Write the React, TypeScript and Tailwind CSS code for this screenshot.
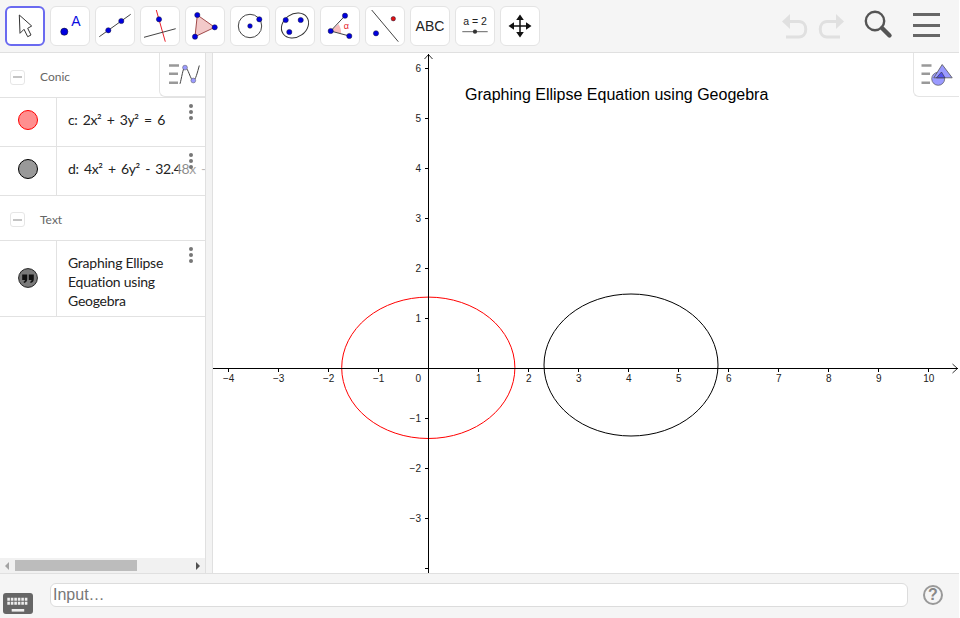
const BLUE = "#0000e0";

function Dot({ x, y, r = 2.6, fill = BLUE }: { x: number; y: number; r?: number; fill?: string }) {
  return <circle cx={x} cy={y} r={r} fill={fill} stroke="#1a1a3a" strokeWidth="0.5" />;
}

const tools = [
  // move
  <path d="M14.3 9 15 27.3 19 23.3 22.7 30.7 26 29 22.7 22.3 26.7 20Z" fill="#fff" stroke="#333" strokeWidth="1" strokeLinejoin="round" />,
  // point
  <>
    <circle cx="14.3" cy="25.7" r="3.6" fill={BLUE} stroke="#111" strokeWidth="0.5" />
    <text x="26" y="20" textAnchor="middle" fontSize="14" fill="#0a0ae0" className="font-['Liberation_Sans',sans-serif]">A</text>
  </>,
  // line
  <>
    <line x1="4.3" y1="30.7" x2="35.7" y2="8.3" stroke="#444" strokeWidth="1" />
    <Dot x={13.3} y={24.3} />
    <Dot x={26.3} y={15} />
  </>,
  // perpendicular
  <>
    <line x1="16.3" y1="4" x2="25.3" y2="35.7" stroke="#e8202a" strokeWidth="1" />
    <line x1="4" y1="31.3" x2="35.7" y2="22.7" stroke="#444" strokeWidth="1" />
    <Dot x={19} y={13.3} />
  </>,
  // polygon
  <>
    <path d="M12.3 9 29.7 21.3 10 30.7Z" fill="#f3c9c9" stroke="#a04a4a" strokeWidth="1" />
    <Dot x={12.3} y={9} />
    <Dot x={29.7} y={21.3} />
    <Dot x={10} y={30.7} />
  </>,
  // circle
  <>
    <circle cx="20" cy="20" r="11.7" fill="none" stroke="#444" strokeWidth="1" />
    <Dot x={20} y={20} r={2.3} />
    <Dot x={29.3} y={13.3} />
  </>,
  // ellipse
  <>
    <ellipse cx="20" cy="19.5" rx="14.5" ry="11.5" fill="none" stroke="#333" strokeWidth="1" transform="rotate(-35 20 19.5)" />
    <Dot x={10.7} y={14} />
    <Dot x={25.7} y={14} />
    <Dot x={14.3} y={26} />
  </>,
  // angle
  <>
    <path d="M10.7 25 18.5 18 Q21.5 23 21 27.5Z" fill="#f7bcbc" />
    <path d="M25 9.7 10.7 25 29.3 30" fill="none" stroke="#444" strokeWidth="1" />
    <Dot x={10.7} y={25} />
    <Dot x={25} y={9.7} />
    <Dot x={29.3} y={30} />
    <text x="26.3" y="23" textAnchor="middle" fontSize="9" fill="#e8202a" className="font-['Liberation_Sans',sans-serif]">α</text>
  </>,
  // line with points
  <>
    <line x1="6.7" y1="4" x2="33.3" y2="35.7" stroke="#444" strokeWidth="1" />
    <Dot x={11} y={27.3} />
    <Dot x={28.3} y={12.7} r={2.2} fill="#e01010" />
  </>,
  // text
  <text x="20" y="25" textAnchor="middle" fontSize="14" fill="#222" className="font-['Liberation_Sans',sans-serif]">ABC</text>,
  // slider
  <>
    <text x="20" y="19" textAnchor="middle" fontSize="10.5" fill="#222" className="font-['Liberation_Sans',sans-serif]">a = 2</text>
    <line x1="7.3" y1="25.7" x2="32.7" y2="25.7" stroke="#666" strokeWidth="1" />
    <circle cx="20" cy="25.7" r="2.1" fill="#333" />
  </>,
  // move view
  <>
    <path d="M20 11V29M11 20H29" stroke="#111" strokeWidth="1.5" />
    <path d="M20 8.5 23.8 14H16.2ZM20 31.5 23.8 26H16.2ZM8.5 20 14 16.2V23.8ZM31.5 20 26 16.2V23.8Z" fill="#111" />
  </>,
];

function Toolbar() {
  return (
    <header className="flex h-[53px] shrink-0 items-start border-b border-[#e0e0e0] bg-[#f5f5f5] pl-[5px] pt-[6px]">
      <div className="flex gap-[5px]">
        {tools.map((icon, i) => (
          <div
            key={i}
            className={`size-10 rounded-md bg-white ${i === 0 ? "border-2 border-[#6a6af0]" : "border border-[#e4e4e4]"}`}
          >
            <svg viewBox={i === 0 ? "2 2 36 36" : "1 1 38 38"} className="block size-full">
              {icon}
            </svg>
          </div>
        ))}
      </div>
      <div className="ml-auto mr-[19px] flex items-center">
        <svg width="64" height="30" viewBox="0 0 64 30" className="mt-[6px]">
          <path d="M3 9.5H18C27 9.5 27 25 18 25H5" fill="none" stroke="#e0e0e0" strokeWidth="3" />
          <path d="M1 9.5 9 2V17Z" fill="#e0e0e0" />
          <path d="M61 9.5H46C37 9.5 37 25 46 25H59" fill="none" stroke="#e0e0e0" strokeWidth="3" />
          <path d="M63 9.5 55 2V17Z" fill="#e0e0e0" />
        </svg>
        <svg width="32" height="32" viewBox="0 0 32 32" className="ml-[17px] mt-[2px]">
          <circle cx="13" cy="12" r="9.2" fill="none" stroke="#555" strokeWidth="2.4" />
          <line x1="20" y1="19" x2="27.5" y2="26.5" stroke="#555" strokeWidth="4.4" strokeLinecap="round" />
        </svg>
        <div className="ml-[19px] flex w-[27px] flex-col gap-[7.3px] pt-[2px]">
          <div className="h-[3px] bg-[#666]" />
          <div className="h-[3px] bg-[#666]" />
          <div className="h-[3px] bg-[#666]" />
        </div>
      </div>
    </header>
  );
}

function GroupHeader({ label, className }: { label: string; className: string }) {
  return (
    <div className={`flex items-center border-b border-[#e2e2e2] pl-[10px] ${className}`}>
      <div className="flex size-[15px] items-center justify-center rounded-[3px] border border-[#e6e6e6] bg-white">
        <div className="h-[2px] w-[9px] bg-[#c4c4c4]" />
      </div>
      <span className="ml-[15px] text-xs text-[#666]">{label}</span>
    </div>
  );
}

function Dots() {
  return (
    <div className="absolute right-[12px] top-[6px] flex flex-col gap-[2px]">
      <div className="size-1 rounded-full bg-[#777]" />
      <div className="size-1 rounded-full bg-[#777]" />
      <div className="size-1 rounded-full bg-[#777]" />
    </div>
  );
}

function Row({
  marble,
  children,
  className,
  inner,
}: {
  marble: React.ReactNode;
  children: React.ReactNode;
  className: string;
  inner: string;
}) {
  return (
    <div className={`relative flex overflow-hidden border-b border-[#e2e2e2] ${className}`}>
      <div className={`flex w-[57px] shrink-0 items-center justify-center border-r border-[#e2e2e2] ${inner}`}>{marble}</div>
      <div className={`flex min-w-0 flex-1 items-center whitespace-nowrap pl-[11px] text-sm text-[#222] ${inner}`}>{children}</div>
      <Dots />
    </div>
  );
}

function AlgebraView() {
  return (
    <aside className="relative flex w-[205px] shrink-0 flex-col bg-white font-['Lato','Liberation_Sans',sans-serif]">
      <GroupHeader label="Conic" className="h-[45px] pt-[4px]" />
      <Row
        className="h-[49px]"
        inner="pb-[4px]"
        marble={<div className="size-5 rounded-full border border-[#f00] bg-[#ff8f8f]" />}
      >
        <span className="tracking-[-0.4px] [word-spacing:2.2px]">c: 2x² + 3y² = 6</span>
      </Row>
      <Row
        className="h-[49px]"
        inner="pb-[4px]"
        marble={<div className="size-5 rounded-full border border-black bg-[#999]" />}
      >
        <span className="tracking-[-0.4px] [word-spacing:2.2px]">d: 4x² + 6y² - 32.48x -</span>
        <div className="absolute inset-y-0 right-0 w-[27px] bg-gradient-to-r from-white/40 to-white/70" />
      </Row>
      <GroupHeader label="Text" className="h-[45px] pt-[3px]" />
      <Row
        className="h-[76px]"
        inner="pb-[2px]"
        marble={
          <svg width="20" height="20" viewBox="0 0 20 20">
            <circle cx="10" cy="10" r="9.4" fill="#7a7a7a" stroke="#222" strokeWidth="1" />
            <path d="M4.2 6.6H9.2V11.3C9.2 13.2 8 14.6 6 15L5.5 13.7C6.5 13.4 6.9 12.9 7 12H4.2ZM10.8 6.6H15.8V11.3C15.8 13.2 14.6 14.6 12.6 15L12.1 13.7C13.1 13.4 13.5 12.9 13.6 12H10.8Z" fill="#111" />
          </svg>
        }
      >
        <div className="whitespace-normal pr-[30px] pt-[8px] leading-[19px] tracking-[-0.25px]">
          Graphing Ellipse Equation using Geogebra
        </div>
      </Row>

      <div className="absolute right-0 top-0 flex h-[44px] w-[46px] items-center justify-center rounded-bl-md border-b border-l border-[#e4e4e4] bg-white">
        <svg width="34" height="24" viewBox="0 0 34 24">
          <path d="M3 2.5H13M3 10.8H12M3 19.8H12" stroke="#999" strokeWidth="2.4" />
          <path d="M14 20.8C15.5 16 17 4.2 19 4.2C22 4.2 24.5 17.5 27.3 17.5C29.5 17.5 31.5 9 33.3 2.5" fill="none" stroke="#444" strokeWidth="1" />
          <circle cx="19" cy="4.6" r="2.4" fill="#9a9aff" stroke="#555" strokeWidth="0.5" />
          <circle cx="27.3" cy="17.5" r="2.4" fill="#9a9aff" stroke="#555" strokeWidth="0.5" />
        </svg>
      </div>

      <div className="mt-auto flex h-[15px] items-center justify-between bg-[#f1f1f1] px-[5px]">
        <div className="h-0 w-0 border-y-[4px] border-r-[4px] border-y-transparent border-r-[#a3a3a3]" />
        <div className="absolute bottom-[2px] left-[15px] h-[11px] w-[122px] bg-[#bcbcbc]" />
        <div className="h-0 w-0 border-y-[4px] border-l-[4px] border-y-transparent border-l-[#505050]" />
      </div>
    </aside>
  );
}

const xTicks = [-4, -3, -2, -1, 1, 2, 3, 4, 5, 6, 7, 8, 9, 10];
const yTicks = [6, 5, 4, 3, 2, 1, -1, -2, -3];

function GraphicsView() {
  return (
    <main className="relative min-w-0 flex-1 bg-white">
      <svg viewBox="213 53 746 520" className="block size-full font-['Liberation_Sans',sans-serif]">
        <ellipse cx="428.3" cy="367.8" rx="86.6" ry="70.7" fill="none" stroke="#ff0000" strokeWidth="1" />
        <ellipse cx="631" cy="365" rx="87" ry="71" fill="none" stroke="#000" strokeWidth="1" />

        <line x1="213" y1="368.5" x2="958" y2="368.5" stroke="#000" strokeWidth="1" />
        <line x1="428.5" y1="54" x2="428.5" y2="573" stroke="#000" strokeWidth="1" />
        <path d="M952.5 364 957.5 368.5 952.5 373" fill="none" stroke="#000" strokeWidth="0.8" />
        <path d="M424.5 59 428.5 54.5 432.5 59" fill="none" stroke="#000" strokeWidth="0.8" />

        {xTicks.map((t) => (
          <g key={t}>
            <line x1={428.5 + t * 50} y1="368" x2={428.5 + t * 50} y2="372" stroke="#000" />
            <text x={428.7 + t * 50} y="382" textAnchor="middle" fontSize="10" fill="#222">
              {t < 0 ? `−${-t}` : t}
            </text>
          </g>
        ))}
        {yTicks.map((t) => (
          <g key={t}>
            <line x1="425" y1={368.5 - t * 50} x2="429" y2={368.5 - t * 50} stroke="#000" />
            <text x="421" y={372 - t * 50} textAnchor="end" fontSize="10" fill="#222">
              {t < 0 ? `−${-t}` : t}
            </text>
          </g>
        ))}
        <line x1="425" y1="568.5" x2="429" y2="568.5" stroke="#000" />
        <text x="421" y="382" textAnchor="end" fontSize="10" fill="#222">0</text>

        <text x="465" y="100" fontSize="16" fill="#000">Graphing Ellipse Equation using Geogebra</text>
      </svg>

      <div className="absolute right-0 top-0 flex h-[44px] w-[46px] items-center justify-center rounded-bl-md border-b border-l border-[#e4e4e4] bg-white">
        <svg width="34" height="24" viewBox="0 0 34 24">
          <path d="M1.5 2.5H11.5M1.5 10.8H10M1.5 19.8H10" stroke="#999" strokeWidth="2.4" />
          <circle cx="18.2" cy="15.8" r="6.5" fill="#9a9aff" stroke="#555" strokeWidth="0.7" />
          <path d="M22.2 1.5 32.2 14.8H13.8Z" fill="#9a9aff" stroke="#555" strokeWidth="0.8" />
          <path d="M21.5 9 25 14.8H16.5Z" fill="#5555ee" stroke="#333" strokeWidth="0.6" />
        </svg>
      </div>
    </main>
  );
}

function InputBar() {
  return (
    <footer className="relative flex h-[45px] shrink-0 items-start border-t border-[#e0e0e0] bg-[#f5f5f5]">
      <svg width="30" height="21" viewBox="0 0 30 21" className="absolute left-[3px] top-[19px]">
        <rect width="30" height="21" rx="3" fill="#666" />
        <path d="M4.3 6.2H25.3M4.3 10.2H25.3" stroke="#eee" strokeWidth="3" strokeDasharray="2.6 0.9" />
        <rect x="8.7" y="16" width="12.5" height="2.6" fill="#eee" />
      </svg>
      <div className="ml-[50px] mt-[9px] flex h-6 w-[858px] items-center rounded-md border border-[#dcdcdc] bg-white pl-[2px] font-['Liberation_Sans',sans-serif] text-base text-[#777]">
        Input…
      </div>
      <div className="ml-[15px] mt-[11px] flex size-5 items-center justify-center rounded-full border-2 border-[#999] font-['Liberation_Sans',sans-serif] text-base font-bold text-[#888]">
        ?
      </div>
    </footer>
  );
}

export default function App() {
  return (
    <div className="flex h-[618px] w-[959px] flex-col overflow-hidden bg-white">
      <Toolbar />
      <div className="flex min-h-0 flex-1">
        <AlgebraView />
        <div className="w-2 shrink-0 border-x border-[#e0e0e0] bg-[#f3f3f3]" />
        <GraphicsView />
      </div>
      <InputBar />
    </div>
  );
}
